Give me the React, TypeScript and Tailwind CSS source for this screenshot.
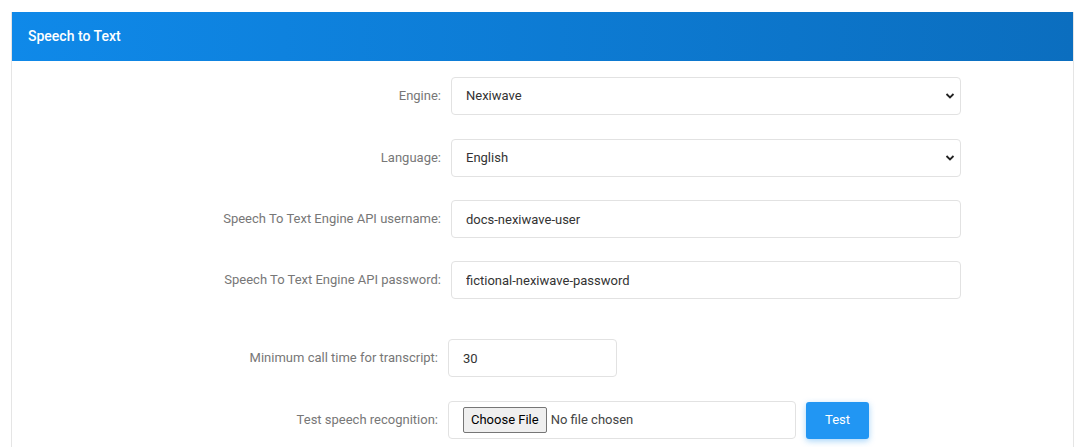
import React from 'react';

const inputCls = 'h-[38px] px-[14px] text-[13px] text-[#333] bg-white border border-[#e2e2e2] rounded-[4px] outline-none';

function Row({ label, children, top }: { label: string; children: React.ReactNode; top: string }) {
  return (
    <div className={`flex items-center ${top}`}>
      <label className="w-[439px] text-right pr-[10px] text-[13px] text-[#777]">{label}</label>
      {children}
    </div>
  );
}

function Chevron() {
  return (
    <svg className="absolute right-[6px] top-[14px]" width="10" height="10" viewBox="0 0 10 10">
      <path d="M1.5 3 L5 6.5 L8.5 3" fill="none" stroke="#222" strokeWidth="1.8" />
    </svg>
  );
}

export default function App() {
  return (
    <div className="min-h-[447px] bg-white pt-[12px] px-[11px] overflow-hidden" style={{ fontFamily: 'Roboto, "Liberation Sans", sans-serif' }}>
      <div className="border border-[#e5e5e5] border-t-0 h-[440px]">
        <div className="h-[49px] flex items-center px-[16px] bg-gradient-to-r from-[#0f89e9] to-[#0b6ebf] text-white text-[14px] font-medium">
          Speech to Text
        </div>
        <div className="pt-[16px]">
          <Row label="Engine:" top="">
            <div className="relative">
              <div className={`${inputCls} w-[510px] flex items-center`}>Nexiwave</div>
              <Chevron />
            </div>
          </Row>
          <Row label="Language:" top="mt-[24px]">
            <div className="relative">
              <div className={`${inputCls} w-[510px] flex items-center`}>English</div>
              <Chevron />
            </div>
          </Row>
          <Row label="Speech To Text Engine API username:" top="mt-[23px]">
            <input className={`${inputCls} w-[510px]`} defaultValue="docs-nexiwave-user" />
          </Row>
          <Row label="Speech To Text Engine API password:" top="mt-[23px]">
            <input className={`${inputCls} w-[510px]`} defaultValue="fictional-nexiwave-password" />
          </Row>
          <div className="flex items-center mt-[40px]">
            <label className="w-[436px] text-right pr-[10px] text-[13px] text-[#777]">Minimum call time for transcript:</label>
            <input className={`${inputCls} w-[169px]`} defaultValue="30" />
          </div>
          <div className="flex items-center mt-[24px]">
            <label className="w-[436px] text-right pr-[10px] text-[13px] text-[#777]">Test speech recognition:</label>
            <div className={`${inputCls} w-[348px] flex items-center`}>
              <span className="px-[7px] py-[2px] border border-[#767676] rounded-[2px] bg-[#efefef] text-[13px] text-black">Choose File</span>
              <span className="ml-[4px] text-[13px] text-[#444]">No file chosen</span>
            </div>
            <button className="ml-[10px] h-[37px] w-[63px] rounded-[3px] bg-[#2196f3] text-white text-[13px] shadow-[0_2px_6px_rgba(33,150,243,0.4)]">Test</button>
          </div>
        </div>
      </div>
    </div>
  );
}
